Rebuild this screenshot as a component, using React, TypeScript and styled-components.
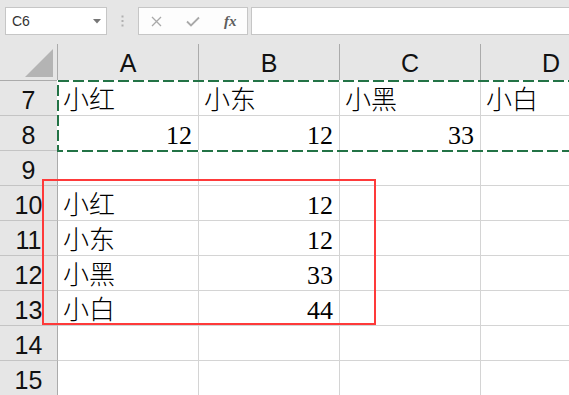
import React from 'react';
import styled, { createGlobalStyle } from 'styled-components';

const GlobalStyle = createGlobalStyle`
  html, body {
    margin: 0;
    padding: 0;
    background: #e6e6e6;
    overflow: hidden;
  }
  * { box-sizing: border-box; }
`;

const Page = styled.div`
  width: 569px;
  height: 395px;
  overflow: hidden;
  background: #ffffff;
`;

const Toolbar = styled.div`
  height: 44px;
  background: #e6e6e6;
  display: flex;
  align-items: flex-start;
  padding: 7px 0 0 5px;
`;

const NameBox = styled.div`
  width: 102px;
  height: 28px;
  background: #ffffff;
  border: 1px solid #c6c6c6;
  display: flex;
  align-items: center;
  justify-content: space-between;
  padding: 0 5px 0 6px;
  font-family: "Liberation Sans", Arial, sans-serif;
  font-size: 14px;
  color: #333;
`;

const Dots = styled.div`
  width: 31px;
  height: 28px;
  display: flex;
  align-items: center;
  justify-content: center;
`;

const FuncBox = styled.div`
  width: 110px;
  height: 28px;
  background: #fdfdfd;
  border: 1px solid #c6c6c6;
  display: flex;
  align-items: center;
  padding: 0 0 0 12px;
  gap: 24px;
`;

const Fx = styled.span`
  font-family: "Liberation Serif", "Times New Roman", serif;
  font-style: italic;
  font-weight: bold;
  font-size: 15px;
  color: #5e5e5e;
`;

const FormulaInput = styled.div`
  flex: 1;
  height: 28px;
  margin-left: 3px;
  background: #ffffff;
  border: 1px solid #c6c6c6;
  border-right: none;
`;

const Sheet = styled.div`
  position: relative;
  display: grid;
  grid-template-columns: 58px repeat(4, 141px);
  grid-auto-rows: 35px;
  grid-template-rows: 37px;
`;

const Corner = styled.div`
  background: #e6e6e6;
  border-right: 1px solid #ababab;
  border-bottom: 1px solid #ababab;
  display: flex;
  align-items: flex-end;
  justify-content: flex-end;
  padding: 0 4px 3px 0;
`;

const ColHead = styled.div`
  background: #e6e6e6;
  border-right: 1px solid #ababab;
  border-bottom: 1px solid #ababab;
  font-family: "Liberation Sans", Arial, sans-serif;
  font-size: 25px;
  line-height: 34px;
  padding-top: 2px;
  text-align: center;
  color: #111;
`;

const RowHead = styled.div`
  background: #e6e6e6;
  border-right: 1px solid #ababab;
  border-bottom: 1px solid #c4c4c4;
  font-family: "Liberation Sans", Arial, sans-serif;
  font-size: 25px;
  line-height: 31px;
  padding-top: 4px;
  text-align: center;
  color: #111;
`;

const Cell = styled.div<{ $num?: boolean }>`
  background: #ffffff;
  border-right: 1px solid #d4d4d4;
  border-bottom: 1px solid #d4d4d4;
  font-family: "Liberation Serif", "Noto Sans CJK SC", serif;
  font-size: 26px;
  font-weight: 300;
  line-height: 29px;
  padding: 5px 6px 0 5px;
  text-align: ${({ $num }) => ($num ? 'right' : 'left')};
  white-space: nowrap;
  overflow: hidden;
  color: #000;
`;

const Marquee = styled.svg`
  position: absolute;
  left: 57px;
  top: 36px;
  width: 520px;
  height: 72px;
  overflow: visible;
  pointer-events: none;
`;

const RedBox = styled.div`
  position: absolute;
  left: 42px;
  top: 135px;
  width: 334px;
  height: 146px;
  border: 2px solid #fe3a3a;
  pointer-events: none;
`;

const columns = ['A', 'B', 'C', 'D'];

const rows: { n: number; cells: (string | number)[] }[] = [
  { n: 7, cells: ['小红', '小东', '小黑', '小白'] },
  { n: 8, cells: [12, 12, 33, ''] },
  { n: 9, cells: ['', '', '', ''] },
  { n: 10, cells: ['小红', 12, '', ''] },
  { n: 11, cells: ['小东', 12, '', ''] },
  { n: 12, cells: ['小黑', 33, '', ''] },
  { n: 13, cells: ['小白', 44, '', ''] },
  { n: 14, cells: ['', '', '', ''] },
  { n: 15, cells: ['', '', '', ''] },
];

const App = () => {
  return (
    <Page>
      <GlobalStyle />
      <Toolbar>
        <NameBox>
          <span>C6</span>
          <svg width="8" height="5" viewBox="0 0 8 5">
            <path d="M0 0 H8 L4 4.5 Z" fill="#767676" />
          </svg>
        </NameBox>
        <Dots>
          <svg width="3" height="12" viewBox="0 0 3 12">
            <rect x="0.5" y="0.5" width="2" height="2" fill="#b0b0b0" />
            <rect x="0.5" y="5" width="2" height="2" fill="#b0b0b0" />
            <rect x="0.5" y="9.5" width="2" height="2" fill="#b0b0b0" />
          </svg>
        </Dots>
        <FuncBox>
          <svg width="11" height="11" viewBox="0 0 11 11">
            <path d="M1 1 L10 10 M10 1 L1 10" stroke="#a9a9a9" strokeWidth="1.3" />
          </svg>
          <svg width="14" height="11" viewBox="0 0 14 11">
            <path d="M1 5.5 L5 9.5 L13 1.5" stroke="#a9a9a9" strokeWidth="1.8" fill="none" />
          </svg>
          <Fx>fx</Fx>
        </FuncBox>
        <FormulaInput />
      </Toolbar>
      <Sheet>
        <Corner>
          <svg width="28" height="28" viewBox="0 0 28 28">
            <path d="M28 0 V28 H0 Z" fill="#b4b4b4" />
          </svg>
        </Corner>
        {columns.map((c) => (
          <ColHead key={c}>{c}</ColHead>
        ))}
        {rows.map((r) => (
          <React.Fragment key={r.n}>
            <RowHead>{r.n}</RowHead>
            {r.cells.map((v, i) => (
              <Cell key={i} $num={typeof v === 'number'}>
                {v}
              </Cell>
            ))}
          </React.Fragment>
        ))}
        <Marquee viewBox="0 0 520 72">
          <rect x="1" y="1" width="560" height="70" fill="none" stroke="#ffffff" strokeWidth="2" />
          <rect
            x="1"
            y="1"
            width="560"
            height="70"
            fill="none"
            stroke="#237346"
            strokeWidth="2"
            strokeDasharray="11 4"
          />
        </Marquee>
        <RedBox />
      </Sheet>
    </Page>
  );
};

export default App;
